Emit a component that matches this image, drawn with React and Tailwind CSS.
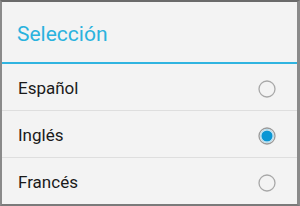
import React from "react";

function Radio({ checked }) {
  return (
    <svg width="20" height="20" viewBox="0 0 20 20">
      <circle cx="10" cy="10" r="8" fill="none" stroke={checked ? "#9a9a9a" : "#a8a8a8"} strokeWidth="1.3" />
      {checked && <circle cx="10" cy="10" r="5.6" fill="#0a96d4" />}
      {checked && <circle cx="10" cy="10" r="6.4" fill="none" stroke="#8fd0ee" strokeWidth="0.8" />}
    </svg>
  );
}

function Row({ label, checked }) {
  return (
    <div className="h-[46px] flex items-center justify-between pl-[16px] pr-[20px] pt-[4px]">
      <span className="text-[17px] text-[#1a1a1a]">{label}</span>
      <Radio checked={checked} />
    </div>
  );
}

export default function App() {
  return (
    <div
      className="w-[300px] h-[206px] bg-[#f3f3f3] border-t-2 border-b-2 border-l-2 border-r-[3px] border-t-[#6a6a6a] border-b-[#7a7a7a] border-l-[#8a8a8a] border-r-[#8a8a8a] flex flex-col"
      style={{ fontFamily: "Roboto, 'Noto Sans', sans-serif" }}
    >
      <div className="h-[60px] flex items-center pl-[15px] pt-[6px]">
        <span className="text-[21px] text-[#2ab2de]">Selección</span>
      </div>
      <div className="h-[2px] bg-[#30b4e0]" />
      <Row label="Español" />
      <div className="h-px bg-[#dedede]" />
      <Row label="Inglés" checked />
      <div className="h-px bg-[#dedede]" />
      <Row label="Francés" />
    </div>
  );
}
